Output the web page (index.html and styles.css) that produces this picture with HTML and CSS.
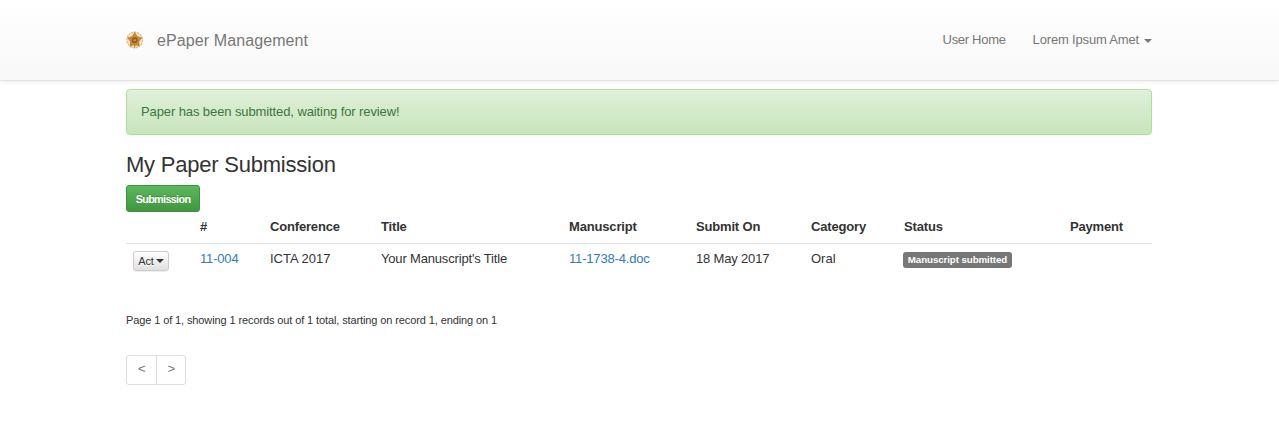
FILE: index.html
```html
<!DOCTYPE html>
<html lang="en">
<head>
<meta charset="utf-8">
<title>ePaper Management</title>
<link rel="stylesheet" href="styles.css">
</head>
<body>
<header class="navbar">
  <div class="container navbar-inner">
    <a class="brand">
      <svg class="logo" viewBox="0 0 18 18" width="18" height="18">
        <circle cx="8.700" cy="9" r="7.800" fill="#f1e6c9" stroke="#d3b777" stroke-width="1.100" stroke-dasharray="2.2 .8"/>
        <path d="M8.700 18 7.500 13h2.400zM8.700 0 7.500 4h2.400zM.500 6.200 5 7.500 4.500 9zM17 6.200 12.500 7.500 13 9zM3.500 16 5.500 11.500 7 13zM14 16 12 11.500 10.500 13z" fill="#c98b25"/>
        <path d="M8.700 2.200 11.300 5.600 15.300 7 12.900 10.500 12.900 14.700 8.700 13.500 4.500 14.700 4.500 10.500 2.100 7 6.100 5.600z" fill="#cc8c34" stroke="#b4701f" stroke-width=".7"/>
        <circle cx="8.700" cy="9.200" r="2.900" fill="#96551b"/>
        <circle cx="8.700" cy="9.200" r="1.400" fill="#c48f4e"/>
      </svg>
      <span class="brand-name">ePaper Management</span>
    </a>
    <nav class="nav">
      <a class="nav-home">User Home</a>
      <a class="nav-user">Lorem Ipsum Amet<span class="caret"></span></a>
    </nav>
  </div>
</header>
<main class="container">
  <div class="alert">Paper has been submitted, waiting for review!</div>
  <h1 class="title">My Paper Submission</h1>
  <a class="btn btn-success">Submission</a>
  <table class="table">
    <colgroup><col class="c-act"><col class="c-id"><col class="c-conf"><col class="c-title"><col class="c-file"><col class="c-date"><col class="c-cat"><col class="c-status"><col class="c-pay"></colgroup>
    <thead>
      <tr><th></th><th>#</th><th>Conference</th><th>Title</th><th>Manuscript</th><th>Submit On</th><th>Category</th><th>Status</th><th>Payment</th></tr>
    </thead>
    <tbody>
      <tr>
        <td><a class="btn btn-default">Act<span class="caret"></span></a></td>
        <td><a class="link">11-004</a></td>
        <td class="conference">ICTA 2017</td>
        <td>Your Manuscript's Title</td>
        <td><a class="link">11-1738-4.doc</a></td>
        <td>18 May 2017</td>
        <td class="category">Oral</td>
        <td><span class="label">Manuscript submitted</span></td>
        <td></td>
      </tr>
    </tbody>
  </table>
  <p class="summary">Page 1 of 1, showing 1 records out of 1 total, starting on record 1, ending on 1</p>
  <div class="pager"><a class="page">&lt;</a><a class="page">&gt;</a></div>
</main>
</body>
</html>
```
FILE: styles.css
```css
* { box-sizing: border-box; }
body {
  margin: 0;
  background: #fff;
  color: #333;
  font: 13px/18px "Liberation Sans", Arial, sans-serif;
}
.container { width: 1026px; margin-left: 126px; }
.navbar {
  height: 81px;
  border-bottom: 1px solid #e2e2e2;
  background: linear-gradient(#fff, #f8f8f8);
  box-shadow: 0 1px 5px rgba(0, 0, 0, .075);
  color: #777;
}
.navbar-inner { display: flex; justify-content: space-between; align-items: center; height: 80px; }
.brand { display: flex; align-items: center; font-size: 16px; letter-spacing: .1px; }
.brand-name { padding-top: 2px; }
.logo { margin-right: 13px; }
.nav { display: flex; gap: 27px; }
.nav-home { letter-spacing: -.3px; }
.nav-user { letter-spacing: -.17px; }
.caret {
  display: inline-block;
  margin-left: 6px;
  border: 4px solid transparent;
  border-bottom: 0;
  border-top-color: currentColor;
  vertical-align: middle;
}
.nav .caret { margin-left: 5px; }
.alert {
  height: 46px;
  margin-top: 8px;
  padding: 13px 14px;
  border: 1px solid #b2dba1;
  border-radius: 4px;
  background: linear-gradient(#dff0d8, #c8e5bc);
  box-shadow: inset 0 1px 0 rgba(255, 255, 255, .25), 0 1px 2px rgba(0, 0, 0, .05);
  color: #3c763d;
  letter-spacing: -.1px;
}
.title { height: 32px; margin: 18px 0 0; font-size: 22px; line-height: 24px; font-weight: 400; letter-spacing: -.22px; }
.btn { display: flex; align-items: center; justify-content: center; border: 1px solid; border-radius: 3px; font-size: 11px; }
.btn-success {
  width: 74px;
  height: 27px;
  padding-top: 1px;
  border-color: #3e8f3e;
  background: linear-gradient(#5cb85c, #419641);
  color: #fff;
  font-size: 10.8px;
  font-weight: 700;
  letter-spacing: -.65px;
  text-shadow: 0 -1px 0 rgba(0, 0, 0, .2);
}
.btn-default {
  width: 36px;
  height: 20px;
  margin-top: 1px;
  border-color: #ccc;
  background: linear-gradient(#fff, #e0e0e0);
  box-shadow: 0 1px 1px rgba(0, 0, 0, .075);
  letter-spacing: -.15px;
  text-shadow: 0 1px 0 #fff;
}
.btn-default .caret { margin-left: 2px; }
.table { width: 1026px; table-layout: fixed; border-collapse: collapse; letter-spacing: -.17px; }
.c-act { width: 67px; }
.c-id { width: 70px; }
.c-conf { width: 111px; }
.c-title { width: 188px; }
.c-file { width: 127px; }
.c-date { width: 115px; }
.c-cat { width: 93px; }
.c-status { width: 166px; }
.c-pay { width: 89px; }
th, td { padding: 6px 7px; text-align: left; vertical-align: top; white-space: nowrap; }
th { height: 31px; border-bottom: 1px solid #ddd; }
.conference, .category { letter-spacing: 0; }
.link { color: #337ab7; }
.label {
  display: block;
  width: 109px;
  height: 16px;
  margin: 2px 0 0 -1px;
  border-radius: 3px;
  background: #777;
  color: #fff;
  font-size: 9.75px;
  font-weight: 700;
  letter-spacing: -.1px;
  line-height: 16px;
  text-align: center;
}
.summary { margin: 34px 0 0; font-size: 11px; line-height: 18px; letter-spacing: -.11px; }
.pager { display: flex; width: 60px; height: 30px; margin-top: 26px; border: 1px solid #ddd; border-radius: 3px; color: #777; }
.page { width: 30px; line-height: 26px; text-align: center; }
.page + .page { width: 29px; border-left: 1px solid #ddd; }
```
